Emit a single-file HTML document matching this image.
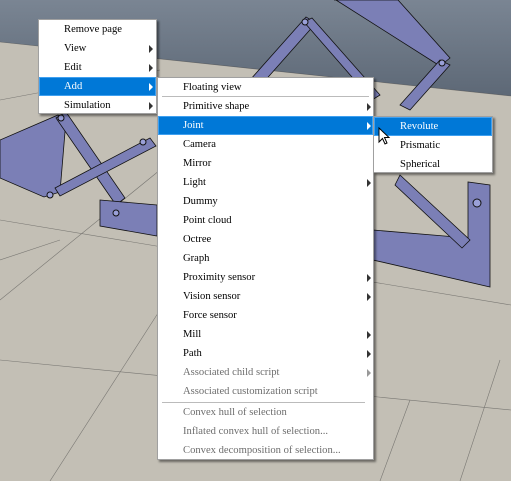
<!DOCTYPE html>
<html><head><meta charset="utf-8"><style>
html,body{margin:0;padding:0;width:511px;height:481px;overflow:hidden;background:#c2beb4}
.bg{position:absolute;left:0;top:0}
.menu{position:absolute;background:#fff;border:1px solid #a0a0a0;box-shadow:2px 2px 2px rgba(0,0,0,.45);font-family:"Liberation Serif",serif;font-size:10.6px;color:#000}
.it{position:absolute;left:0;right:0;height:19px;line-height:19px}
.it span{position:absolute;white-space:nowrap}
.hl{background:#0078d7;color:#fff;box-shadow:inset 0 0 0 1px #3fa0f0}
.dis{color:#6d6d6d}
.ar{position:absolute;width:0;height:0;border-top:4px solid transparent;border-bottom:4px solid transparent;border-left:4px solid #333;top:6px}
.hl .ar{border-left-color:#fff}
.dis .ar{border-left-color:#999}
.sep{position:absolute;height:1px;background:#bbb}
</style></head><body>
<svg class="bg" width="511" height="481" viewBox="0 0 511 481">
<defs><linearGradient id="sky" x1="0" y1="0" x2="0" y2="1"><stop offset="0" stop-color="#7a8593"/><stop offset="1" stop-color="#5d6876"/></linearGradient></defs>
<rect width="511" height="481" fill="#c3bfb5"/>
<polygon points="0,0 511,0 511,96 0,42" fill="url(#sky)"/>
<g stroke="#3c3c3c" stroke-width="0.6" fill="none" opacity="0.55">
<line x1="0" y1="42" x2="511" y2="96"/>
<line x1="0" y1="220" x2="511" y2="305"/>
<line x1="0" y1="360" x2="511" y2="410"/>
<line x1="0" y1="100" x2="160" y2="70"/>
<line x1="0" y1="300" x2="160" y2="170"/>
<line x1="50" y1="481" x2="160" y2="310"/>
<line x1="460" y1="481" x2="500" y2="360"/>
<line x1="380" y1="481" x2="410" y2="400"/>
<line x1="0" y1="260" x2="60" y2="240"/>
</g>
<g fill="#7b7fb6" stroke="#111" stroke-width="0.8">
<polygon points="0,140 58,115 66,120 60,192 44,197 0,178"/>
<polygon points="56,118 66,112 125,198 116,205"/>
<polygon points="55,188 150,138 156,146 60,196"/>
<polygon points="100,200 157,205 157,236 100,226"/>
<polygon points="250,80 306,17 316,23 262,84"/>
<polygon points="334,0 398,0 450,58 440,66 336,0"/>
<polygon points="304,22 312,18 380,95 372,100"/>
<polygon points="440,60 450,65 410,110 400,105"/>
<polygon points="373,230 468,238 468,182 490,185 490,287 373,260"/>
<polygon points="400,175 470,240 462,248 395,185"/>
</g>
<g fill="#9aa0d8" stroke="#111" stroke-width="1">
<circle cx="61" cy="118" r="3"/><circle cx="50" cy="195" r="3"/><circle cx="143" cy="142" r="3"/>
<circle cx="305" cy="22" r="3"/><circle cx="442" cy="63" r="3"/><circle cx="477" cy="203" r="4"/><circle cx="116" cy="213" r="3"/>
</g>
</svg>

<div class="menu" style="left:38px;top:19px;width:117px;height:93px">
<div class="it" style="top:0"><span style="left:25px">Remove page</span></div>
<div class="it" style="top:19px"><span style="left:25px">View</span><i class="ar" style="left:110px"></i></div>
<div class="it" style="top:38px"><span style="left:25px">Edit</span><i class="ar" style="left:110px"></i></div>
<div class="it hl" style="top:57px"><span style="left:25px">Add</span><i class="ar" style="left:110px"></i></div>
<div class="it" style="top:76px"><span style="left:25px">Simulation</span><i class="ar" style="left:110px"></i></div>
</div>

<div class="menu" style="left:157px;top:77px;width:215px;height:381px">
<div class="it" style="top:0"><span style="left:25px">Floating view</span></div>
<div class="sep" style="left:4px;right:4px;top:18px"></div>
<div class="it" style="top:19px"><span style="left:25px">Primitive shape</span><i class="ar" style="left:209px"></i></div>
<div class="it hl" style="top:38px"><span style="left:25px">Joint</span><i class="ar" style="left:209px"></i></div>
<div class="it" style="top:57px"><span style="left:25px">Camera</span></div>
<div class="it" style="top:76px"><span style="left:25px">Mirror</span></div>
<div class="it" style="top:95px"><span style="left:25px">Light</span><i class="ar" style="left:209px"></i></div>
<div class="it" style="top:114px"><span style="left:25px">Dummy</span></div>
<div class="it" style="top:133px"><span style="left:25px">Point cloud</span></div>
<div class="it" style="top:152px"><span style="left:25px">Octree</span></div>
<div class="it" style="top:171px"><span style="left:25px">Graph</span></div>
<div class="it" style="top:190px"><span style="left:25px">Proximity sensor</span><i class="ar" style="left:209px"></i></div>
<div class="it" style="top:209px"><span style="left:25px">Vision sensor</span><i class="ar" style="left:209px"></i></div>
<div class="it" style="top:228px"><span style="left:25px">Force sensor</span></div>
<div class="it" style="top:247px"><span style="left:25px">Mill</span><i class="ar" style="left:209px"></i></div>
<div class="it" style="top:266px"><span style="left:25px">Path</span><i class="ar" style="left:209px"></i></div>
<div class="it dis" style="top:285px"><span style="left:25px">Associated child script</span><i class="ar" style="left:209px"></i></div>
<div class="it dis" style="top:304px"><span style="left:25px">Associated customization script</span></div>
<div class="sep" style="left:4px;right:8px;top:324px"></div>
<div class="it dis" style="top:325px"><span style="left:25px">Convex hull of selection</span></div>
<div class="it dis" style="top:344px"><span style="left:25px">Inflated convex hull of selection...</span></div>
<div class="it dis" style="top:363px"><span style="left:25px">Convex decomposition of selection...</span></div>
</div>

<div class="menu" style="left:373px;top:116px;width:118px;height:55px">
<div class="it hl" style="top:0"><span style="left:26px">Revolute</span></div>
<div class="it" style="top:19px"><span style="left:26px">Prismatic</span></div>
<div class="it" style="top:38px"><span style="left:26px">Spherical</span></div>
</div>

<svg style="position:absolute;left:378px;top:127px" width="14" height="20" viewBox="0 0 14 20">
<path d="M1 1 L1 15 L4.5 11.5 L7 17 L9 16 L6.5 10.5 L11 10.5 Z" fill="#fff" stroke="#000" stroke-width="1"/>
</svg>
</body></html>
